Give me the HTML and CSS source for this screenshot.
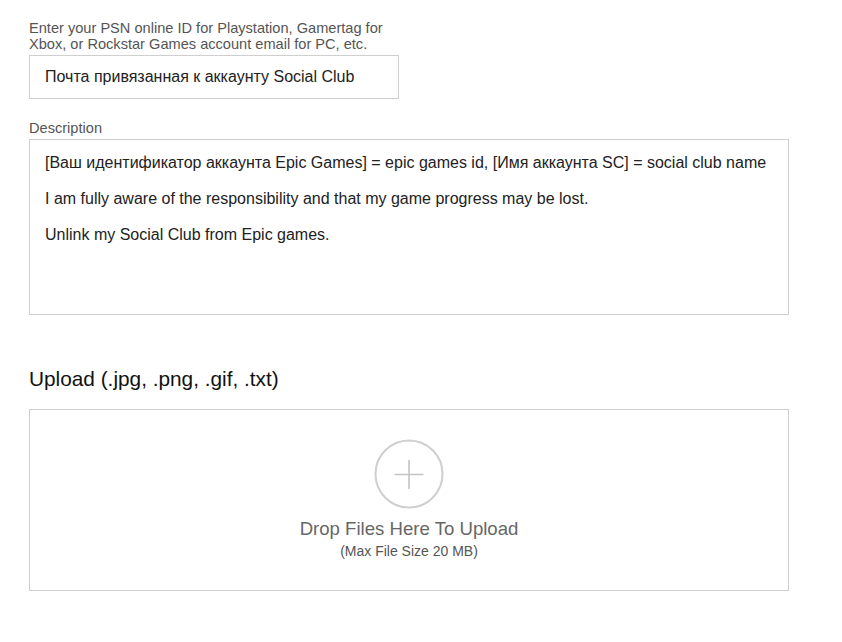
FILE: index.html
```html
<!DOCTYPE html>
<html lang="en">
<head>
  <meta charset="UTF-8">
  <title>Support Request</title>
  <link rel="stylesheet" href="styles.css">
</head>
<body>
  <div class="form">
      <label class="field-label">Enter your PSN online ID for Playstation, Gamertag for<br>Xbox, or Rockstar Games account email for PC, etc.</label>
      <div class="text-input">Почта привязанная к аккаунту Social Club</div>

      <label class="field-label desc-label">Description</label>
      <div class="text-area">
          <p>[Ваш идентификатор аккаунта Epic Games] = epic games id, [Имя аккаунта SC] = social club name</p>
          <p>I am fully aware of the responsibility and that my game progress may be lost.</p>
          <p>Unlink my Social Club from Epic games.</p>
      </div>

      <div class="upload-title">Upload (.jpg, .png, .gif, .txt)</div>
      <div class="dropzone">
          <svg class="add-icon" width="70" height="70" viewBox="0 0 70 70">
              <circle cx="35" cy="35" r="33.5" fill="none" stroke="#cfcfcf" stroke-width="2"/>
              <path d="M35 21 V50 M20.5 35.5 H49.5" stroke="#c4c4c4" stroke-width="1.6"/>
          </svg>
          <div class="drop-text">Drop Files Here To Upload</div>
          <div class="drop-note">(Max File Size 20 MB)</div>
      </div>
  </div>
</body>
</html>
```

FILE: styles.css
```css
body {
    font-family: 'Liberation Sans', Arial, sans-serif;
    background: #fff;
    margin: 0;
    padding: 0;
}
.form {
    padding: 20px 0 0 29px;
    width: 760px;
}
.field-label {
    display: block;
    font-size: 14.6px;
    line-height: 16px;
    color: #555;
    margin-bottom: 3px;
}
.desc-label {
    margin-top: 21px;
}
.text-input {
    height: 42px;
    width: 338px;
    border: 1px solid #cfcfcf;
    padding: 0 15px;
    font-size: 16px;
    line-height: 42px;
    color: #222;
}
.text-area {
    height: 160px;
    border: 1px solid #cfcfcf;
    padding: 14px 15px 0;
    font-size: 16px;
    line-height: 18px;
    color: #222;
}
.text-area p {
    margin: 0 0 18px;
}
.upload-title {
    margin-top: 52px;
    font-size: 20.8px;
    line-height: 24px;
    color: #111;
}
.dropzone {
    margin-top: 18px;
    height: 182px;
    box-sizing: border-box;
    border: 1px solid #cfcfcf;
    padding-top: 29px;
    display: flex;
    flex-direction: column;
    align-items: center;
}
.add-icon {
    display: block;
}
.drop-text {
    margin-top: 9px;
    font-size: 18.6px;
    line-height: 22px;
    color: #666;
}
.drop-note {
    margin-top: 3px;
    font-size: 14px;
    line-height: 16px;
    color: #555;
}
```
